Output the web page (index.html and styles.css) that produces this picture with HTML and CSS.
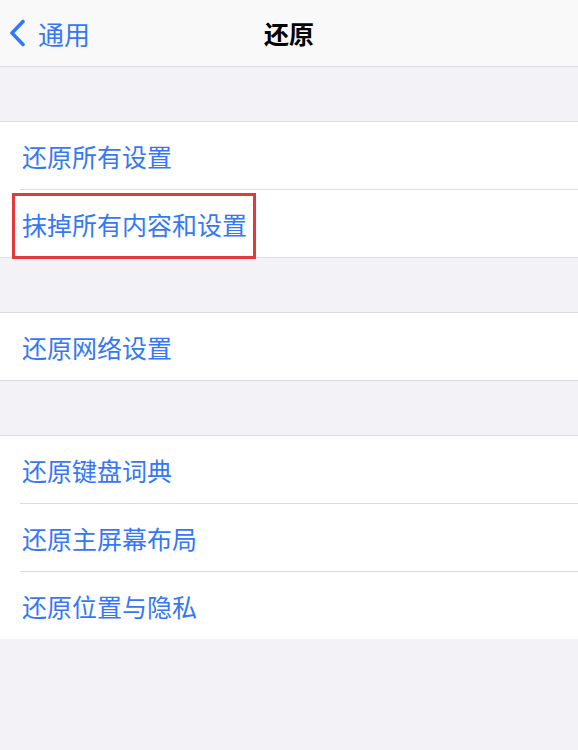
FILE: index.html
```html
<!DOCTYPE html>
<html lang="zh-CN">
<head>
  <meta charset="UTF-8">
  <meta name="viewport" content="width=device-width, initial-scale=1.0">
  <title>还原</title>
  <link rel="stylesheet" href="styles.css">
</head>
<body>
  <div class="navbar">
    <div class="back">
      <svg class="chevron" width="19" height="28" viewBox="0 0 19 28">
        <path d="M15 2.5 L4 14 L15 25.5" fill="none" stroke="#3478f6" stroke-width="3.6" stroke-linecap="round" stroke-linejoin="round"/>
      </svg>
      <span>通用</span>
    </div>
    <div class="title">还原</div>
  </div>

  <div class="group">
    <div class="row">还原所有设置</div>
    <div class="row">
      <span class="highlight">抹掉所有内容和设置</span>
    </div>
  </div>

  <div class="group">
    <div class="row">还原网络设置</div>
  </div>

  <div class="group">
    <div class="row">还原键盘词典</div>
    <div class="row">还原主屏幕布局</div>
    <div class="row">还原位置与隐私</div>
  </div>
</body>
</html>
```

FILE: styles.css
```css
body {
  margin: 0;
  background-color: #f2f2f7;
  font-family: "Noto Sans CJK SC", "Noto Sans", sans-serif;
}

.navbar {
  position: relative;
  display: flex;
  align-items: center;
  height: 66px;
  background-color: #f9f9f9;
  border-bottom: 1px solid #dcdcdf;
}

.back {
  display: flex;
  align-items: center;
  gap: 11px;
  padding-left: 8px;
  color: #3478f6;
  font-size: 26px;
}

.chevron {
  display: block;
}

.title {
  position: absolute;
  left: 0;
  right: 0;
  text-align: center;
  font-size: 25px;
  font-weight: bold;
  color: #000;
}

.group {
  margin-top: 54px;
  background-color: #fff;
  border-top: 1px solid #dcdcdf;
  border-bottom: 1px solid #dcdcdf;
}

.group:last-child {
  border-bottom: none;
}

.row {
  display: flex;
  align-items: center;
  height: 67px;
  padding-left: 22px;
  font-size: 25px;
  color: #3478f6;
}

.row + .row {
  border-top: 1px solid #dcdcdf;
  margin-left: 20px;
  padding-left: 2px;
}

/* red annotation box round the erase row */
.highlight {
  position: relative;
  align-self: stretch;
  display: flex;
  align-items: center;
}

.highlight::after {
  content: "";
  position: absolute;
  left: -10px;
  right: -9px;
  top: 3px;
  bottom: -2px;
  border: 3px solid #e5383b;
}
```
